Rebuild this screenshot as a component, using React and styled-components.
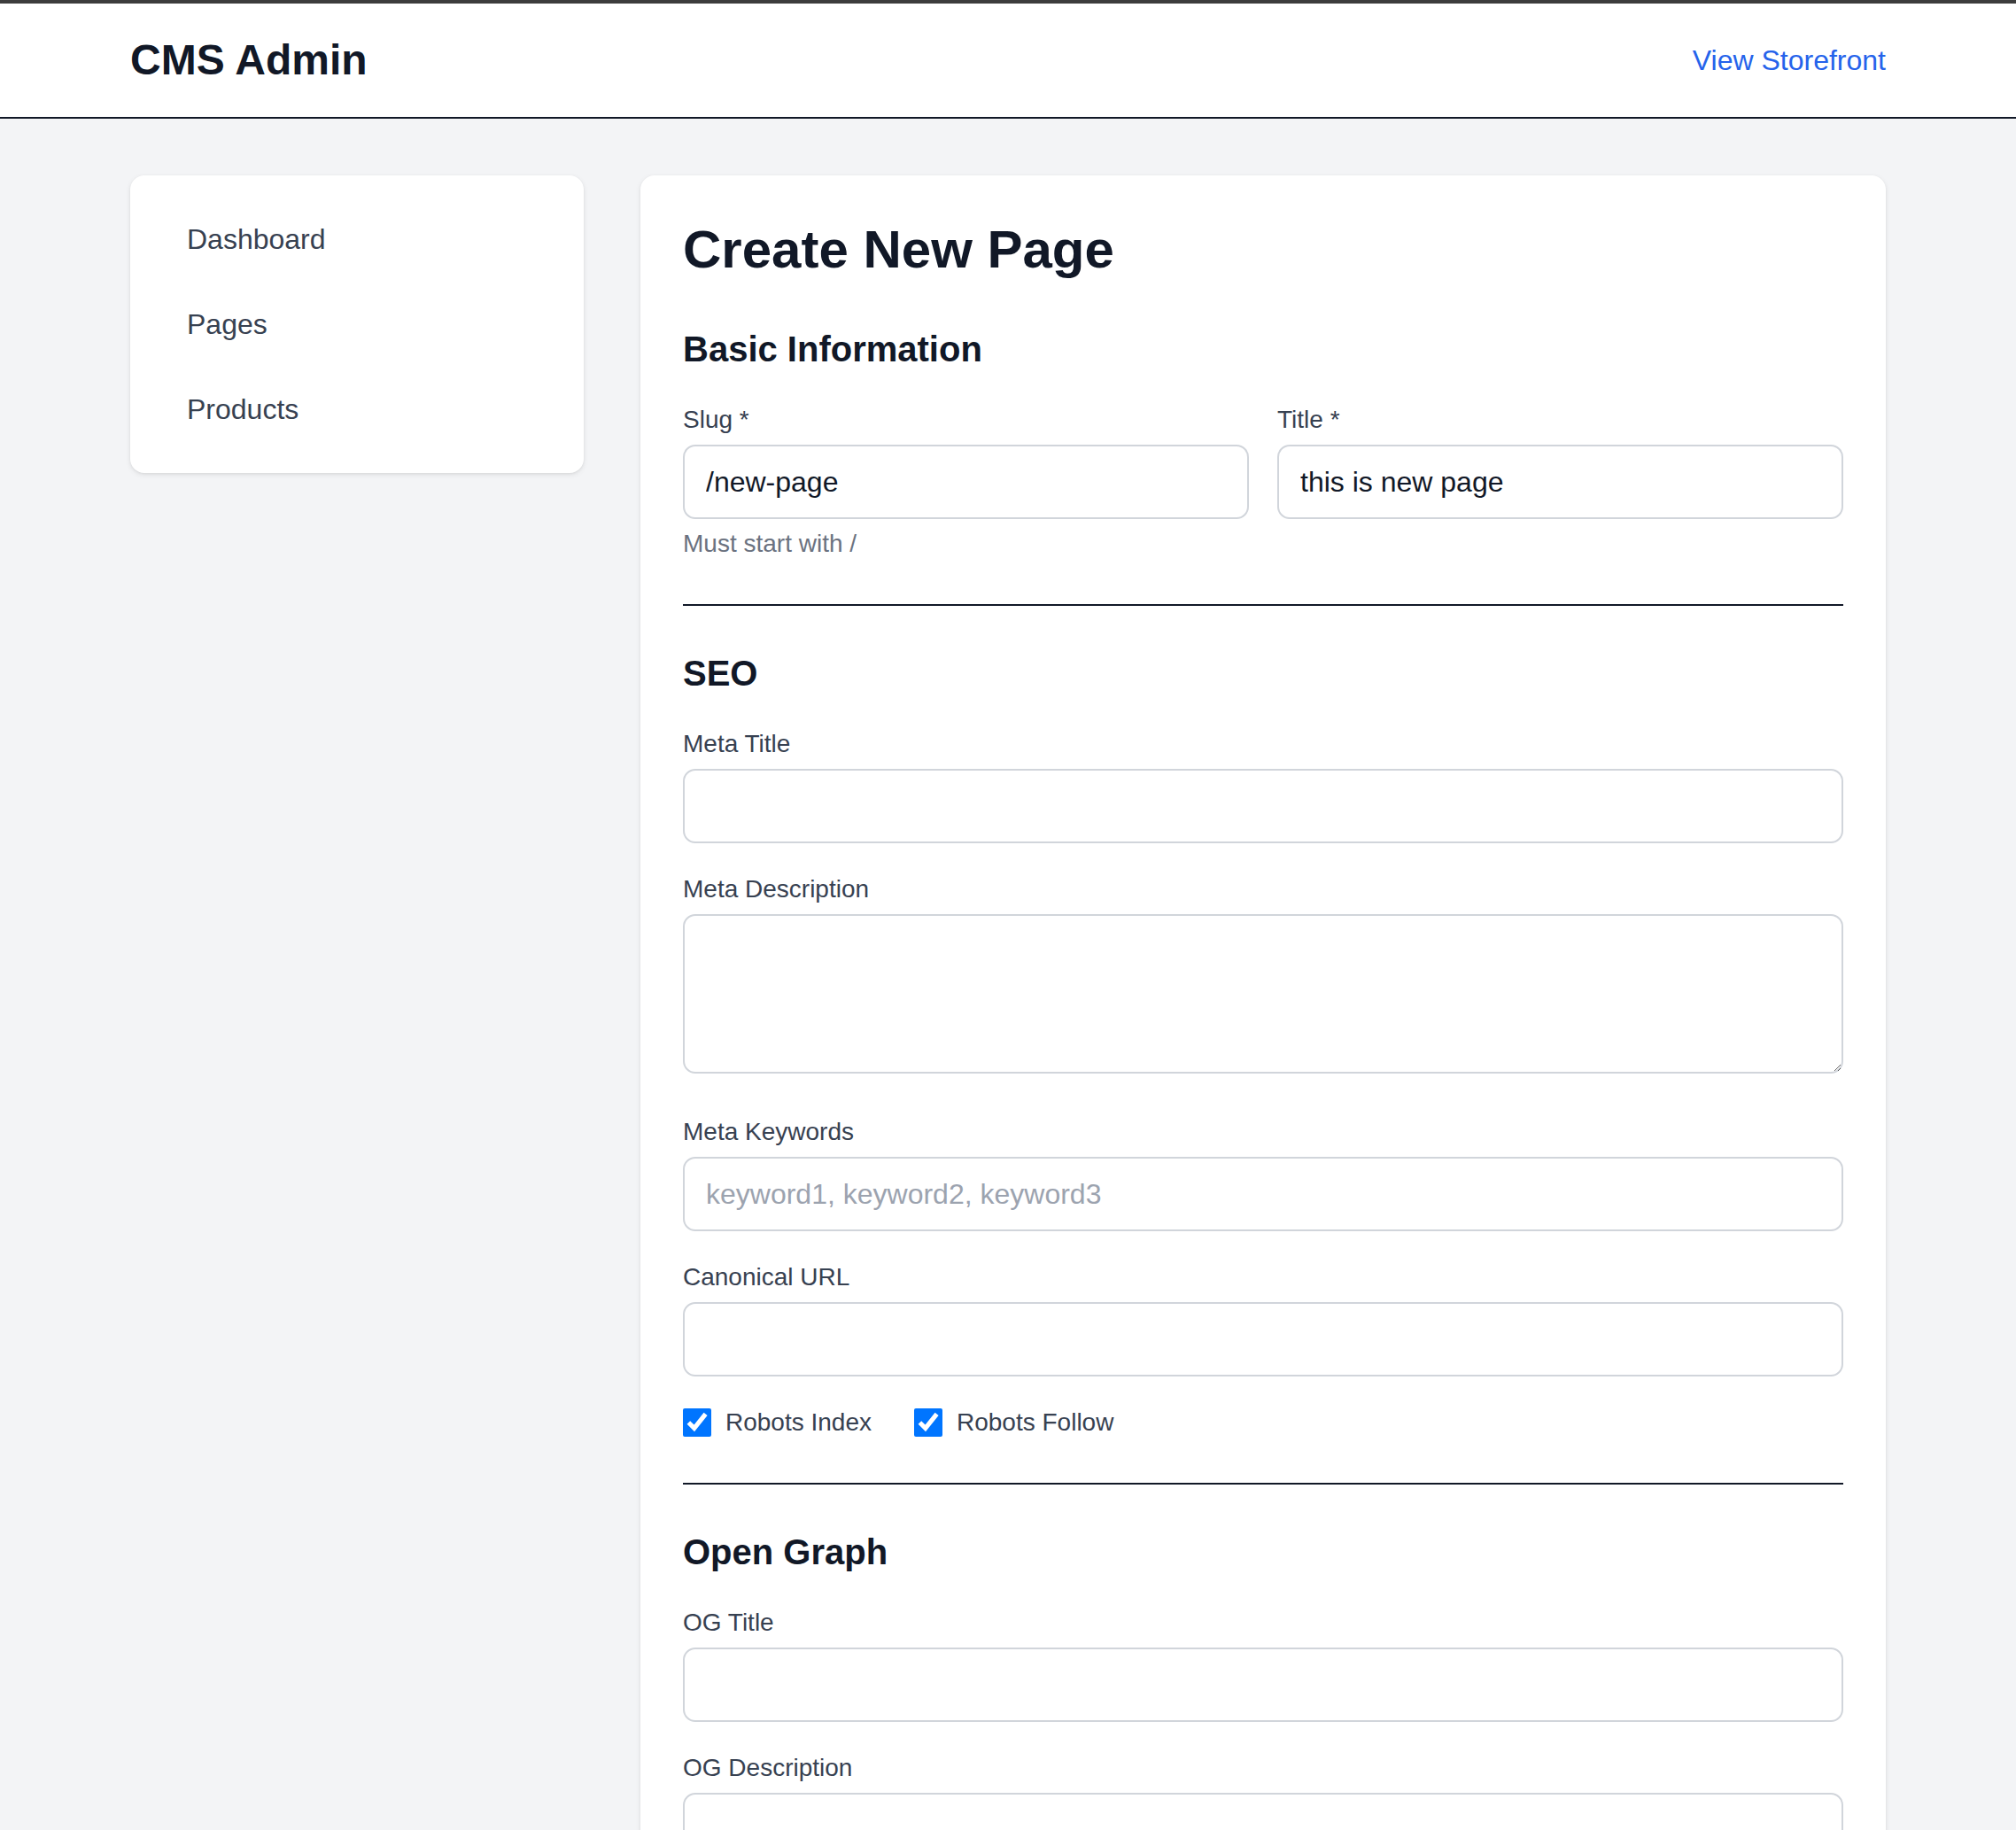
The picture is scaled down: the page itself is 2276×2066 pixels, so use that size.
import React from "react";
import styled, { createGlobalStyle } from "styled-components";

const GlobalStyle = createGlobalStyle`
  *, *::before, *::after { box-sizing: border-box; }
  html, body { margin: 0; padding: 0; }
  body {
    font-family: "Liberation Sans", Arial, Helvetica, sans-serif;
    background: #f3f4f6;
    color: #111827;
  }
`;

const Shell = styled.div`
  height: 100vh;
  display: flex;
  flex-direction: column;
  overflow: hidden;
`;

const TopBar = styled.header`
  flex: none;
  background: #ffffff;
  border-top: 4px solid #3d3d3d;
  border-bottom: 2px solid #111827;
`;

const Container = styled.div`
  max-width: 1982px;
  margin: 0 auto;
`;

const TopBarInner = styled(Container)`
  display: flex;
  align-items: center;
  justify-content: space-between;
  padding: 32px 0;
`;

const Brand = styled.h1`
  margin: 0;
  font-size: 48px;
  line-height: 64px;
  font-weight: 700;
  color: #111827;
`;

const StoreLink = styled.a`
  font-size: 32px;
  line-height: 48px;
  color: #2563eb;
  text-decoration: none;
`;

const ScrollArea = styled.div`
  flex: 1;
  overflow-y: auto;
  scrollbar-width: none;
  &::-webkit-scrollbar { display: none; }
`;

const Layout = styled(Container)`
  display: flex;
  align-items: flex-start;
  gap: 64px;
  padding: 64px 0;
`;

const Sidebar = styled.nav`
  flex: none;
  width: 512px;
  background: #ffffff;
  border-radius: 16px;
  box-shadow: 0 2px 6px rgba(0, 0, 0, 0.08), 0 1px 3px rgba(0, 0, 0, 0.06);
  padding: 32px;
  display: flex;
  flex-direction: column;
  gap: 16px;
`;

const NavLink = styled.a`
  display: block;
  padding: 16px 32px;
  border-radius: 8px;
  font-size: 32px;
  line-height: 48px;
  color: #374151;
  text-decoration: none;
`;

const Card = styled.main`
  flex: 1;
  min-width: 0;
  background: #ffffff;
  border-radius: 16px;
  box-shadow: 0 2px 6px rgba(0, 0, 0, 0.08), 0 1px 3px rgba(0, 0, 0, 0.06);
  padding: 48px;
`;

const PageTitle = styled.h2`
  margin: 0 0 48px;
  font-size: 60px;
  line-height: 72px;
  font-weight: 700;
  color: #111827;
`;

const Form = styled.form`
  display: flex;
  flex-direction: column;
  gap: 48px;
`;

const Section = styled.section`
  ${({ $divided }) =>
    $divided &&
    `
    border-top: 2px solid #111827;
    padding-top: 48px;
  `}
`;

const SectionTitle = styled.h3`
  margin: 0 0 32px;
  font-size: 40px;
  line-height: 56px;
  font-weight: 700;
  color: #111827;
`;

const Fields = styled.div`
  display: flex;
  flex-direction: column;
  gap: 32px;
`;

const TwoCol = styled.div`
  display: grid;
  grid-template-columns: 1fr 1fr;
  gap: 32px;
`;

const Field = styled.div``;

const Label = styled.label`
  display: block;
  margin-bottom: 8px;
  font-size: 28px;
  line-height: 40px;
  color: #374151;
`;

const TextInput = styled.input`
  display: block;
  width: 100%;
  height: 84px;
  padding: 0 24px;
  border: 2px solid #d1d5db;
  border-radius: 14px;
  background: #ffffff;
  font-family: inherit;
  font-size: 32px;
  line-height: 48px;
  color: #111827;
  outline: none;
  &::placeholder { color: #9ca3af; }
`;

const TextArea = styled.textarea`
  display: block;
  width: 100%;
  height: 180px;
  margin-bottom: 14px;
  padding: 16px 24px;
  border: 2px solid #d1d5db;
  border-radius: 14px;
  background: #ffffff;
  font-family: inherit;
  font-size: 32px;
  line-height: 48px;
  color: #111827;
  outline: none;
`;

const Help = styled.p`
  margin: 8px 0 0;
  font-size: 28px;
  line-height: 40px;
  color: #6b7280;
`;

const CheckRow = styled.div`
  display: flex;
  align-items: center;
  gap: 48px;
`;

const CheckLabel = styled.label`
  display: inline-flex;
  align-items: center;
  gap: 16px;
  font-size: 28px;
  line-height: 40px;
  color: #374151;
`;

const CheckInput = styled.input`
  width: 32px;
  height: 32px;
  margin: 0;
  accent-color: #0075ff;
`;

const TextField = ({ label, value, placeholder }) => (
  <Field>
    <Label>{label}</Label>
    <TextInput type="text" defaultValue={value} placeholder={placeholder} />
  </Field>
);

const AreaField = ({ label }) => (
  <Field>
    <Label>{label}</Label>
    <TextArea rows={3} />
  </Field>
);

export default function App() {
  return (
    <>
      <GlobalStyle />
      <Shell>
        <TopBar>
          <TopBarInner>
            <Brand>CMS Admin</Brand>
            <StoreLink href="#">View Storefront</StoreLink>
          </TopBarInner>
        </TopBar>
        <ScrollArea>
          <Layout>
            <Sidebar>
              <NavLink href="#">Dashboard</NavLink>
              <NavLink href="#">Pages</NavLink>
              <NavLink href="#">Products</NavLink>
            </Sidebar>
            <Card>
              <PageTitle>Create New Page</PageTitle>
              <Form onSubmit={(e) => e.preventDefault()}>
                <Section>
                  <SectionTitle>Basic Information</SectionTitle>
                  <TwoCol>
                    <Field>
                      <Label>Slug *</Label>
                      <TextInput type="text" defaultValue="/new-page" />
                      <Help>Must start with /</Help>
                    </Field>
                    <TextField label="Title *" value="this is new page" />
                  </TwoCol>
                </Section>

                <Section $divided>
                  <SectionTitle>SEO</SectionTitle>
                  <Fields>
                    <TextField label="Meta Title" />
                    <AreaField label="Meta Description" />
                    <TextField
                      label="Meta Keywords"
                      placeholder="keyword1, keyword2, keyword3"
                    />
                    <TextField label="Canonical URL" />
                    <CheckRow>
                      <CheckLabel>
                        <CheckInput type="checkbox" defaultChecked />
                        Robots Index
                      </CheckLabel>
                      <CheckLabel>
                        <CheckInput type="checkbox" defaultChecked />
                        Robots Follow
                      </CheckLabel>
                    </CheckRow>
                  </Fields>
                </Section>

                <Section $divided>
                  <SectionTitle>Open Graph</SectionTitle>
                  <Fields>
                    <TextField label="OG Title" />
                    <AreaField label="OG Description" />
                    <TextField label="OG Image URL" />
                  </Fields>
                </Section>
              </Form>
            </Card>
          </Layout>
        </ScrollArea>
      </Shell>
    </>
  );
}
